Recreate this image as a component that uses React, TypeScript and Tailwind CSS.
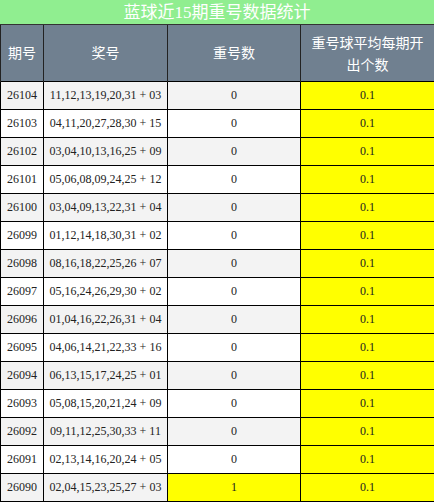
import React from "react";

const rows: [string, string, number][] = [
  ["26104", "11,12,13,19,20,31 + 03", 0],
  ["26103", "04,11,20,27,28,30 + 15", 0],
  ["26102", "03,04,10,13,16,25 + 09", 0],
  ["26101", "05,06,08,09,24,25 + 12", 0],
  ["26100", "03,04,09,13,22,31 + 04", 0],
  ["26099", "01,12,14,18,30,31 + 02", 0],
  ["26098", "08,16,18,22,25,26 + 07", 0],
  ["26097", "05,16,24,26,29,30 + 02", 0],
  ["26096", "01,04,16,22,26,31 + 04", 0],
  ["26095", "04,06,14,21,22,33 + 16", 0],
  ["26094", "06,13,15,17,24,25 + 01", 0],
  ["26093", "05,08,15,20,21,24 + 09", 0],
  ["26092", "09,11,12,25,30,33 + 11", 0],
  ["26091", "02,13,14,16,20,24 + 05", 0],
  ["26090", "02,04,15,23,25,27 + 03", 1],
];

export default function App() {
  return (
    <div className="w-[434px] bg-white font-['Liberation_Serif','Noto_Sans_CJK_SC',serif]">
      <div className="h-[25px] bg-[#90ee90] text-center text-[17px] leading-[25px] text-white border-b border-[#333]">
        蓝球近15期重号数据统计
      </div>
      <table className="w-[434px] table-fixed border-collapse text-[12px] text-[#222]">
        <colgroup>
          <col className="w-[43px]" />
          <col className="w-[124px]" />
          <col className="w-[133px]" />
          <col className="w-[134px]" />
        </colgroup>
        <thead>
          <tr className="h-[56px] bg-[#708090] text-white text-[14px] font-['Noto_Sans_CJK_SC',sans-serif] font-normal">
            <th className="border-x border-[#222] font-normal px-1">期号</th>
            <th className="border-x border-[#222] font-normal px-2">奖号</th>
            <th className="border-x border-[#222] font-normal px-2">重号数</th>
            <th className="border-x border-[#222] font-normal px-2 leading-[22px]">重号球平均每期开出个数</th>
          </tr>
        </thead>
        <tbody>
          {rows.map(([issue, nums, rep], i) => (
            <tr key={issue} className={`h-[28px] ${i % 2 === 0 ? "bg-[#f3f3f3]" : "bg-white"}`}>
              <td className="border border-black text-center">{issue}</td>
              <td className="border border-black text-center">{nums}</td>
              <td className={`border border-black text-center ${rep > 0 ? "bg-[#ffff00]" : ""}`}>{rep}</td>
              <td className="border border-black text-center bg-[#ffff00]">0.1</td>
            </tr>
          ))}
        </tbody>
      </table>
    </div>
  );
}
